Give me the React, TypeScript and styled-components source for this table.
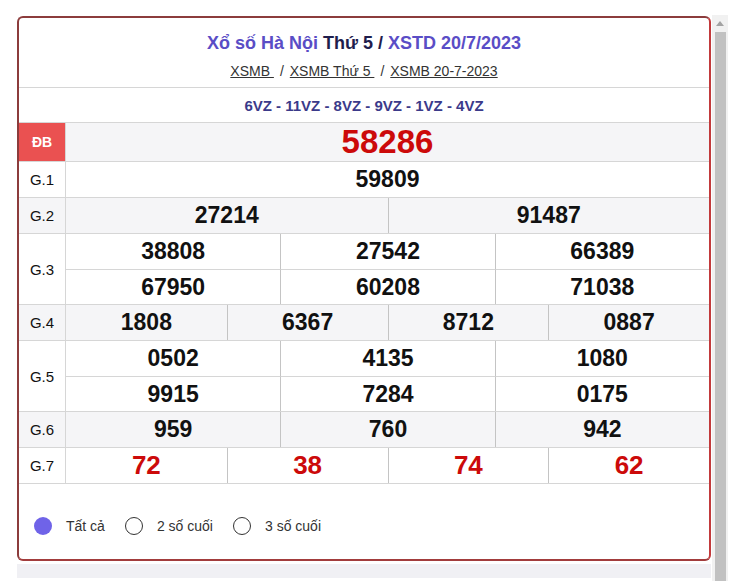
import React from "react";
import styled, { createGlobalStyle } from "styled-components";

const Global = createGlobalStyle`
  html, body { margin: 0; padding: 0; background: #fff; }
  body { font-family: "Liberation Sans", Arial, sans-serif; overflow: hidden; }
`;

const Page = styled.div`
  display: flex;
  width: 732px;
  height: 581px;
  overflow: hidden;
`;

const Main = styled.div`
  width: 694px;
  padding: 16px 0 0 17px;
  display: flex;
  flex-direction: column;
`;

const Card = styled.div`
  border: 2px solid;
  border-color: #8c3c3c #c23a3c #a23c3c #8c3c3c;
  border-radius: 6px;
  background: #fff;
  display: flex;
  flex-direction: column;
`;

const Header = styled.div`
  display: flex;
  flex-direction: column;
  align-items: center;
  padding: 12px 0 7px;
  border-bottom: 1px solid #d6d6d6;
`;

const Title = styled.h1`
  margin: 0;
  font-size: 18px;
  line-height: 26px;
  font-weight: bold;
  color: #1f1d4d;
`;

const Accent = styled.span`
  color: #5a4dc6;
`;

const Crumbs = styled.div`
  margin-top: 6px;
  font-size: 14px;
  line-height: 18px;
  color: #333;
  display: flex;
  gap: 6px;
`;

const Crumb = styled.a`
  color: #333;
  text-decoration: underline;
  white-space: pre;
`;

const Codes = styled.div`
  height: 34px;
  display: flex;
  align-items: center;
  justify-content: center;
  font-size: 15px;
  font-weight: bold;
  color: #3b3a8a;
  border-bottom: 1px solid #d6d6d6;
`;

const Row = styled.div<{ $alt?: boolean }>`
  display: grid;
  grid-template-columns: 47px 1fr;
  background: ${(p) => (p.$alt ? "#f5f5f7" : "#fff")};
  border-bottom: 1px solid #d6d6d6;
`;

const Label = styled.div<{ $special?: boolean }>`
  display: flex;
  align-items: center;
  justify-content: center;
  border-right: 1px solid #d6d6d6;
  font-size: ${(p) => (p.$special ? "14px" : "15px")};
  font-weight: ${(p) => (p.$special ? "bold" : "normal")};
  color: ${(p) => (p.$special ? "#fff" : "#111")};
  background: ${(p) => (p.$special ? "#ea5151" : "transparent")};
`;

const Cells = styled.div<{ $cols: number }>`
  display: grid;
  grid-template-columns: repeat(${(p) => p.$cols}, 1fr);
`;

const Cell = styled.div<{
  $first: boolean;
  $top: boolean;
  $size: number;
  $red?: boolean;
  $h: number;
}>`
  height: ${(p) => p.$h}px;
  display: flex;
  align-items: center;
  justify-content: center;
  font-size: ${(p) => p.$size}px;
  font-weight: bold;
  color: ${(p) => (p.$red ? "#cc0a0a" : "#111")};
  border-left: ${(p) => (p.$first ? "none" : "1px solid #c4c4c4")};
  border-top: ${(p) => (p.$top ? "1px solid #d6d6d6" : "none")};
`;

const Options = styled.div`
  display: flex;
  align-items: center;
  padding: 33px 0 24px 15px;
`;

const Option = styled.label`
  display: flex;
  align-items: center;
  font-size: 14px;
  color: #333;
  margin-right: 20px;
`;

const Radio = styled.span<{ $on?: boolean }>`
  width: 18px;
  height: 18px;
  box-sizing: border-box;
  border-radius: 50%;
  margin-right: 14px;
  border: ${(p) => (p.$on ? "none" : "1px solid #333")};
  background: ${(p) => (p.$on ? "#6f63e8" : "#fff")};
`;

const Band = styled.div`
  margin-top: 3px;
  height: 14px;
  background: #f0f0f4;
`;

const ScrollBar = styled.div`
  margin: 15px 0 0 1px;
  width: 16px;
  background: #f1f1f1;
  display: flex;
  flex-direction: column;
  align-items: center;
`;

const Arrow = styled.div`
  height: 17px;
  display: flex;
  align-items: center;
  justify-content: center;
`;

const Thumb = styled.div`
  width: 11px;
  flex: 1;
  background: #c1c1c1;
`;

type Prize = {
  label: string;
  cols: number;
  nums: string[];
  alt?: boolean;
  size?: number;
  red?: boolean;
  special?: boolean;
  h?: number;
};

const prizes: Prize[] = [
  { label: "ĐB", cols: 1, nums: ["58286"], alt: true, size: 33, red: true, special: true, h: 38 },
  { label: "G.1", cols: 1, nums: ["59809"] },
  { label: "G.2", cols: 2, nums: ["27214", "91487"], alt: true },
  { label: "G.3", cols: 3, nums: ["38808", "27542", "66389", "67950", "60208", "71038"] },
  { label: "G.4", cols: 4, nums: ["1808", "6367", "8712", "0887"], alt: true },
  { label: "G.5", cols: 3, nums: ["0502", "4135", "1080", "9915", "7284", "0175"] },
  { label: "G.6", cols: 3, nums: ["959", "760", "942"], alt: true },
  { label: "G.7", cols: 4, nums: ["72", "38", "74", "62"], size: 26, red: true },
];

export default function App() {
  return (
    <Page>
      <Global />
      <Main>
        <Card>
          <Header>
            <Title>
              <Accent>Xổ số Hà Nội</Accent> Thứ 5 / <Accent>XSTD 20/7/2023</Accent>
            </Title>
            <Crumbs>
              <Crumb>XSMB </Crumb>/<Crumb>XSMB Thứ 5 </Crumb>/<Crumb>XSMB 20-7-2023</Crumb>
            </Crumbs>
          </Header>
          <Codes>6VZ - 11VZ - 8VZ - 9VZ - 1VZ - 4VZ</Codes>
          {prizes.map((p) => (
            <Row key={p.label} $alt={p.alt}>
              <Label $special={p.special}>{p.label}</Label>
              <Cells $cols={p.cols}>
                {p.nums.map((n, i) => (
                  <Cell
                    key={i}
                    $first={i % p.cols === 0}
                    $top={i >= p.cols}
                    $size={p.size ?? 23}
                    $red={p.red}
                    $h={p.h ?? (i >= p.cols ? 34 : 35)}
                  >
                    {n}
                  </Cell>
                ))}
              </Cells>
            </Row>
          ))}
          <Options>
            <Option>
              <Radio $on />
              Tất cả
            </Option>
            <Option>
              <Radio />2 số cuối
            </Option>
            <Option>
              <Radio />3 số cuối
            </Option>
          </Options>
        </Card>
        <Band />
      </Main>
      <ScrollBar>
        <Arrow>
          <svg width="8" height="5" viewBox="0 0 8 5">
            <path d="M0 5 L4 0 L8 5 Z" fill="#a3a3a3" />
          </svg>
        </Arrow>
        <Thumb />
      </ScrollBar>
    </Page>
  );
}
